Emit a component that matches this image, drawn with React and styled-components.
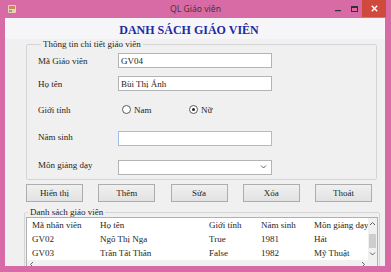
import React from 'react';
import styled, { createGlobalStyle } from 'styled-components';

const Global = createGlobalStyle`
  html, body { margin: 0; padding: 0; background: #fff; }
  body { width: 391px; height: 272px; overflow: hidden; }
  * { box-sizing: border-box; }
`;

const Window = styled.div`
  width: 391px;
  height: 272px;
  background: #d86aa6;
  display: flex;
  flex-direction: column;
  font-family: "Liberation Serif", "Times New Roman", serif;
  color: #1e1e1e;
`;

const TitleBar = styled.div`
  height: 18px;
  flex: none;
  display: grid;
  grid-template-columns: 1fr auto 1fr;
  align-items: center;
`;

const AppIcon = styled.svg`
  margin-left: 8px;
  display: block;
`;

const Title = styled.div`
  font-family: "Noto Sans", "Open Sans", sans-serif;
  font-size: 8.6px;
  color: #3a3a3a;
  line-height: 18px;
`;

const Controls = styled.div`
  justify-self: end;
  display: flex;
  height: 18px;
  margin-right: 5px;
`;

const CtrlButton = styled.div`
  width: ${p => p.$w}px;
  height: ${p => (p.$close ? 17 : 18)}px;
  background: ${p => (p.$close ? '#cf4a3c' : 'transparent')};
  display: flex;
  align-items: center;
  justify-content: center;
`;

const Client = styled.div`
  flex: 1;
  margin: 0 6px 6px 5px;
  background: #f0f0f0;
  display: flex;
  flex-direction: column;
  overflow: hidden;
`;

const Heading = styled.h1`
  margin: 0;
  height: 21px;
  padding: 3px 12px 0 0;
  line-height: 18px;
  background: #f6f6f8;
  text-align: center;
  font-size: 12px;
  font-weight: bold;
  color: #1c2aa4;
  flex: none;
`;

const GroupBox = styled.fieldset`
  margin: ${p => p.$margin};
  padding: ${p => p.$padding};
  border: 1px solid #d5d5d5;
  border-radius: 2px;
  min-width: 0;
  flex: none;
`;

const Legend = styled.legend`
  margin-left: ${p => p.$offset}px;
  padding: 0 2px;
  font-size: 9px;
  line-height: 10px;
  color: #1e1e1e;
`;

const FormRow = styled.div`
  display: flex;
  align-items: center;
  height: ${p => p.$h}px;
  margin-top: ${p => p.$top}px;
`;

const FieldLabel = styled.span`
  width: 80px;
  flex: none;
  font-size: 9px;
  line-height: 10px;
  margin-bottom: ${p => (p.$raise || 0) * 2}px;
`;

const TextBox = styled.input`
  width: 154px;
  height: 100%;
  border: 1px solid ${p => (p.$focus ? '#9fc0e4' : '#b4b4b4')};
  background: #fff;
  padding: 0 2px;
  font-family: "Liberation Serif", "Times New Roman", serif;
  font-size: 9px;
  color: #1e1e1e;
  outline: none;
`;

const Combo = styled.div`
  width: 154px;
  height: 100%;
  border: 1px solid #b4b4b4;
  background: #fff;
  display: flex;
  align-items: center;
  justify-content: flex-end;
  padding-right: 4px;
`;

const RadioGroup = styled.div`
  display: flex;
  align-items: center;
  padding-left: 4px;
`;

const RadioOption = styled.label`
  display: flex;
  align-items: center;
  gap: 3px;
  width: ${p => p.$w}px;
  font-size: 9px;
  line-height: 10px;
`;

const RadioCircle = styled.span`
  width: 9px;
  height: 9px;
  border-radius: 50%;
  border: 1px solid #5a5a5a;
  background: #fff;
  display: flex;
  align-items: center;
  justify-content: center;
  flex: none;
  &::after {
    content: '';
    width: 3px;
    height: 3px;
    border-radius: 50%;
    background: ${p => (p.$checked ? '#222' : 'transparent')};
  }
`;

const ButtonRow = styled.div`
  display: flex;
  justify-content: space-between;
  margin: 4px 13px 0 21px;
  flex: none;
`;

const Button = styled.button`
  width: 57px;
  height: 18px;
  padding: 0;
  border: 1px solid #adadad;
  background: linear-gradient(#f0f0f0, #e2e2e2);
  font-family: "Liberation Serif", "Times New Roman", serif;
  font-size: 9px;
  color: #1e1e1e;
`;

const Grid = styled.div`
  background: #fff;
  border: 1px solid #b0b0b0;
  display: grid;
  grid-template-columns: 1fr 9px;
  grid-template-rows: 42px 8px;
`;

const Table = styled.div`
  display: grid;
  grid-template-columns: 68px 109px 52px 53px 90px;
  grid-auto-rows: 14px;
  padding-left: 1px;
  overflow: hidden;
`;

const Cell = styled.div`
  padding-left: 4px;
  font-size: 9px;
  line-height: 14px;
  white-space: nowrap;
  overflow: hidden;
`;

const VScroll = styled.div`
  background: #f0f0f0;
  display: flex;
  flex-direction: column;
`;

const HScroll = styled.div`
  background: #f0f0f0;
  display: flex;
  align-items: center;
`;

const ArrowBox = styled.div`
  flex: none;
  width: ${p => p.$w || 9}px;
  height: ${p => p.$h || 8}px;
  display: flex;
  align-items: center;
  justify-content: center;
`;

const Track = styled.div`
  flex: 1;
  display: flex;
  flex-direction: ${p => (p.$vertical ? 'column' : 'row')};
`;

const Thumb = styled.div`
  background: #cdcdcd;
  ${p =>
    p.$vertical
      ? `margin: 4px 1px 0 1px; height: 14px;`
      : `margin: 1px 0 1px 1px; width: 311px;`}
`;

const Corner = styled.div`
  background: #f0f0f0;
`;

const Chevron = ({ dir }) => {
  const paths = {
    up: 'M1 4 L3.5 1.5 L6 4',
    down: 'M1 1.5 L3.5 4 L6 1.5',
    left: 'M4 1 L1.5 3.5 L4 6',
    right: 'M2 1 L4.5 3.5 L2 6',
  };
  return (
    <svg width="7" height="7" viewBox="0 0 7 7">
      <path d={paths[dir]} fill="none" stroke="#606060" strokeWidth="1" />
    </svg>
  );
};

const rows = [
  ['Mã nhân viên', 'Họ tên', 'Giới tính', 'Năm sinh', 'Môn giảng dạy'],
  ['GV02', 'Ngô Thị Nga', 'True', '1981', 'Hát'],
  ['GV03', 'Trần Tất Thân', 'False', '1982', 'Mỹ Thuật'],
];

export default function App() {
  return (
    <>
      <Global />
      <Window>
        <TitleBar>
          <AppIcon width="8" height="10" viewBox="0 0 8 10">
            <rect x="0" y="1" width="8" height="8" rx="1" fill="#e8d4b0" />
            <rect x="1" y="2" width="6" height="3" fill="#c88a5a" />
            <rect x="1" y="6" width="3" height="2" fill="#7aa0c8" />
          </AppIcon>
          <Title>QL Giáo viên</Title>
          <Controls>
            <CtrlButton $w={16}>
              <svg width="6" height="6" viewBox="0 0 6 6">
                <rect x="0" y="4" width="6" height="1.2" fill="#333" />
              </svg>
            </CtrlButton>
            <CtrlButton $w={16}>
              <svg width="7" height="6" viewBox="0 0 7 6">
                <rect x="0.5" y="0.5" width="6" height="5" fill="none" stroke="#333" strokeWidth="1" />
                <rect x="0" y="0" width="7" height="2" fill="#333" />
              </svg>
            </CtrlButton>
            <CtrlButton $w={24} $close>
              <svg width="7" height="7" viewBox="0 0 7 7">
                <path d="M0.8 0.8 L6.2 6.2 M6.2 0.8 L0.8 6.2" stroke="#fff" strokeWidth="1.4" />
              </svg>
            </CtrlButton>
          </Controls>
        </TitleBar>
        <Client>
          <Heading>DANH SÁCH GIÁO VIÊN</Heading>
          <GroupBox $margin="0 8px 0 21px" $padding="0 0 4px 11px">
            <Legend $offset={3}>Thông tin chi tiết giáo viên</Legend>
            <FormRow $h={15} $top={4}>
              <FieldLabel>Mã Giáo viên</FieldLabel>
              <TextBox defaultValue="GV04" readOnly />
            </FormRow>
            <FormRow $h={15} $top={8}>
              <FieldLabel>Họ tên</FieldLabel>
              <TextBox defaultValue="Bùi Thị Ánh" readOnly />
            </FormRow>
            <FormRow $h={15} $top={11}>
              <FieldLabel>Giới tính</FieldLabel>
              <RadioGroup>
                <RadioOption $w={67}>
                  <RadioCircle />
                  Nam
                </RadioOption>
                <RadioOption $w={40}>
                  <RadioCircle $checked />
                  Nữ
                </RadioOption>
              </RadioGroup>
            </FormRow>
            <FormRow $h={15} $top={14}>
              <FieldLabel $raise={2}>Năm sinh</FieldLabel>
              <TextBox $focus defaultValue="" readOnly />
            </FormRow>
            <FormRow $h={15} $top={14}>
              <FieldLabel $raise={3}>Môn giảng dạy</FieldLabel>
              <Combo>
                <Chevron dir="down" />
              </Combo>
            </FormRow>
          </GroupBox>
          <ButtonRow>
            <Button>Hiển thị</Button>
            <Button>Thêm</Button>
            <Button>Sửa</Button>
            <Button>Xóa</Button>
            <Button>Thoát</Button>
          </ButtonRow>
          <GroupBox $margin="5px 5px 0 19px" $padding="0 1px">
            <Legend $offset={2}>Danh sách giáo viên</Legend>
            <Grid>
              <Table>
                {rows.map((r, i) =>
                  r.map((c, j) => <Cell key={`${i}-${j}`}>{c}</Cell>)
                )}
              </Table>
              <VScroll>
                <ArrowBox $h={12}>
                  <Chevron dir="up" />
                </ArrowBox>
                <Track $vertical>
                  <Thumb $vertical />
                </Track>
                <ArrowBox $h={11}>
                  <Chevron dir="down" />
                </ArrowBox>
              </VScroll>
              <HScroll>
                <ArrowBox $w={10}>
                  <Chevron dir="left" />
                </ArrowBox>
                <Track>
                  <Thumb />
                </Track>
                <ArrowBox $w={10}>
                  <Chevron dir="right" />
                </ArrowBox>
              </HScroll>
              <Corner />
            </Grid>
          </GroupBox>
        </Client>
      </Window>
    </>
  );
}
